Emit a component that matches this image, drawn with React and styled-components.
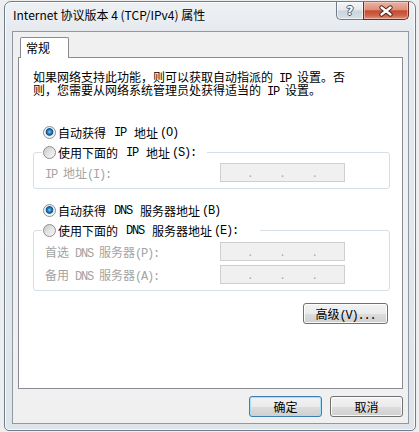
import React from "react"
import styled, { createGlobalStyle } from "styled-components"

const GlobalStyle = createGlobalStyle`
  html, body {
    margin: 0;
    padding: 0;
  }
  body {
    width: 419px;
    height: 432px;
    overflow: hidden;
    background: #eceef0;
    font-family: "Noto Sans CJK SC", "Noto Sans", sans-serif;
    font-size: 12px;
    color: #000;
  }
`

const Desktop = styled.div`
  width: 419px;
  height: 432px;
  box-sizing: border-box;
  padding: 1px 0 0 4px;
`

const Window = styled.div`
  width: 412px;
  height: 430px;
  box-sizing: border-box;
  border: 1px solid #6f7d8c;
  border-radius: 7px 7px 5px 5px;
  background: linear-gradient(180deg, #eef1f4 0%, #e6eaee 7%, #dfe4e9 100%);
  box-shadow: inset 0 0 0 1px rgba(255, 255, 255, 0.75);
  padding: 0 6px 6px 7px;
  display: flex;
  flex-direction: column;
`

const TitleBar = styled.div`
  height: 29px;
  display: flex;
  align-items: flex-start;
`

const Title = styled.div`
  padding: 5px 0 0 1px;
  line-height: 16px;
  font-size: 12px;
  white-space: nowrap;
`

const Caption = styled.div`
  margin-left: auto;
  display: flex;
`

const HelpButton = styled.div`
  width: 27px;
  height: 18px;
  box-sizing: border-box;
  border: 1px solid #6d7b8a;
  border-top: none;
  border-right: none;
  border-radius: 0 0 0 5px;
  background: linear-gradient(180deg, #f3f5f7 0%, #e3e8ec 48%, #cbd3db 52%, #d9dfe5 100%);
  box-shadow: inset 0 0 0 1px rgba(255, 255, 255, 0.6);
  display: flex;
  align-items: center;
  justify-content: center;
  font-family: "DejaVu Sans", sans-serif;
  font-weight: bold;
  font-size: 12px;
  color: #fff;
  text-shadow: 1px 0 #4d5b69, -1px 0 #4d5b69, 0 1px #4d5b69, 0 -1px #4d5b69;
`

const CloseButton = styled.div`
  width: 46px;
  height: 18px;
  box-sizing: border-box;
  border: 1px solid #6b2b22;
  border-top: none;
  border-radius: 0 0 5px 0;
  background: linear-gradient(180deg, #eab3a4 0%, #dc8f7a 46%, #c44a30 52%, #cf6447 80%, #e0977f 100%);
  box-shadow: inset 0 0 0 1px rgba(255, 220, 210, 0.5);
  display: flex;
  align-items: center;
  justify-content: center;
`

const Client = styled.div`
  height: 393px;
  box-sizing: border-box;
  border: 1px solid #8d99a6;
  background: #f0f0f0;
  padding: 5px 5px 0 5px;
  display: flex;
  flex-direction: column;
`

const TabStrip = styled.div`
  display: flex;
  padding-left: 2px;
`

const Tab = styled.div`
  position: relative;
  z-index: 1;
  width: 49px;
  height: 21px;
  box-sizing: border-box;
  margin-bottom: -1px;
  padding-left: 5px;
  border: 1px solid #898c95;
  border-bottom: none;
  border-radius: 2px 2px 0 0;
  background: #fff;
  line-height: 20px;
`

const Panel = styled.div`
  height: 332px;
  box-sizing: border-box;
  border: 1px solid #898c95;
  background: #fff;
  padding: 12px 12px 0 14px;
  display: flex;
  flex-direction: column;
`

const Description = styled.p`
  margin: 0;
  line-height: 13px;
  white-space: nowrap;
`

const Latin = styled.span`
  font-family: "Liberation Mono", monospace;
  font-size: 12px;
  letter-spacing: -1.2px;
  line-height: 0;
  white-space: pre;
`

const RadioRow = styled.label`
  display: flex;
  align-items: center;
  gap: 2px;
  height: 17px;
  margin-top: ${p => p.$top || 0}px;
  padding-left: ${p => (p.$inset ? 10 : 0)}px;
  line-height: 17px;
  white-space: nowrap;
`

const Radio = styled.span`
  flex: none;
  width: 13px;
  height: 13px;
  box-sizing: border-box;
  border-radius: 50%;
  border: 1px solid #8e8f8f;
  background: ${p =>
    p.$checked
      ? "radial-gradient(circle at 50% 45%, #8fdcf8 0, #2f8fcb 1.5px, #134f86 3.4px, #e9eef2 4.2px, #fbfbfb 6px)"
      : "linear-gradient(135deg, #c9c9c9 0%, #e6e6e6 55%, #f7f7f7 100%)"};
`

const Group = styled.fieldset`
  margin: ${p => p.$top || 0}px 0 0 0;
  padding: 0 0 6px 0;
  min-width: 0;
  border: 1px solid #d5dfe5;
  border-radius: 3px;
`

const Legend = styled.legend`
  margin-left: 8px;
  padding: 0 ${p => p.$gap}px 0 1px;
`

const FieldRow = styled.div`
  display: grid;
  grid-template-columns: 175px 125px;
  align-items: center;
  height: 19px;
  margin-top: ${p => p.$top}px;
  padding-left: 11px;
  color: #a3a3a3;
  line-height: 19px;
  white-space: nowrap;
`

const IpBox = styled.div`
  height: 19px;
  box-sizing: border-box;
  border: 1px solid #cfcfcf;
  background: #f0f0f0;
  display: grid;
  grid-template-columns: 1fr auto 1fr auto 1fr auto 1fr;
  align-items: end;
  padding-bottom: 1px;
`

const Dot = styled.span`
  font-family: "Liberation Mono", monospace;
  font-size: 10px;
  line-height: 10px;
  color: #a0a0a0;
`

const Button = styled.button`
  width: ${p => p.$w}px;
  height: 21px;
  box-sizing: border-box;
  padding: 0;
  font: inherit;
  line-height: 19px;
  color: #000;
  border: 1px solid ${p => (p.$primary ? "#3c7fb1" : "#707070")};
  border-radius: 3px;
  background: linear-gradient(180deg, #f2f2f2 0%, #ebebeb 50%, #dddddd 51%, #cfcfcf 100%);
  box-shadow: inset 0 0 0 1px ${p => (p.$primary ? "#a9def6" : "rgba(255, 255, 255, 0.85)")};
  white-space: nowrap;
`

const AdvancedButton = styled(Button)`
  align-self: flex-end;
  margin: 12px 2px 0 0;
`

const ButtonBar = styled.div`
  display: flex;
  justify-content: flex-end;
  gap: 8px;
  margin-top: 7px;
`

const ASCII = /^[\x20-\x7e]+$/

const Mixed = ({ children }) =>
  String(children)
    .split(/([\x20-\x7e]+)/)
    .filter(Boolean)
    .map((part, i) => (ASCII.test(part) ? <Latin key={i}>{part}</Latin> : part))

const CloseIcon = () => (
  <svg width="16" height="12" viewBox="0 0 16 12">
    <path d="M3.5 2.5 L12.5 9.5 M12.5 2.5 L3.5 9.5" stroke="#4a2019" strokeWidth="4.2" strokeLinecap="round" />
    <path d="M3.5 2.5 L12.5 9.5 M12.5 2.5 L3.5 9.5" stroke="#fff" strokeWidth="2.4" strokeLinecap="round" />
  </svg>
)

const IpField = () => (
  <IpBox>
    <span />
    <Dot>.</Dot>
    <span />
    <Dot>.</Dot>
    <span />
    <Dot>.</Dot>
    <span />
  </IpBox>
)

const App = () => (
  <>
    <GlobalStyle />
    <Desktop>
      <Window>
        <TitleBar>
          <Title>Internet 协议版本 4 (TCP/IPv4) 属性</Title>
          <Caption>
            <HelpButton>?</HelpButton>
            <CloseButton>
              <CloseIcon />
            </CloseButton>
          </Caption>
        </TitleBar>
        <Client>
          <TabStrip>
            <Tab>常规</Tab>
          </TabStrip>
          <Panel>
            <Description>
              <Mixed>如果网络支持此功能，则可以获取自动指派的 IP 设置。否</Mixed>
              <br />
              <Mixed>则，您需要从网络系统管理员处获得适当的 IP 设置。</Mixed>
            </Description>

            <RadioRow $top={28} $inset>
              <Radio $checked />
              <Mixed>自动获得 IP 地址(O)</Mixed>
            </RadioRow>
            <Group $top={3}>
              <Legend $gap={11}>
                <RadioRow>
                  <Radio />
                  <Mixed>使用下面的 IP 地址(S):</Mixed>
                </RadioRow>
              </Legend>
              <FieldRow $top={2}>
                <span><Mixed>IP 地址(I):</Mixed></span>
                <IpField />
              </FieldRow>
            </Group>

            <RadioRow $top={13} $inset>
              <Radio $checked />
              <Mixed>自动获得 DNS 服务器地址(B)</Mixed>
            </RadioRow>
            <Group $top={3}>
              <Legend $gap={22}>
                <RadioRow>
                  <Radio />
                  <Mixed>使用下面的 DNS 服务器地址(E):</Mixed>
                </RadioRow>
              </Legend>
              <FieldRow $top={3}>
                <span><Mixed>首选 DNS 服务器(P):</Mixed></span>
                <IpField />
              </FieldRow>
              <FieldRow $top={4}>
                <span><Mixed>备用 DNS 服务器(A):</Mixed></span>
                <IpField />
              </FieldRow>
            </Group>

            <AdvancedButton $w={85}>
              <Mixed>高级(V)...</Mixed>
            </AdvancedButton>
          </Panel>
          <ButtonBar>
            <Button $w={73} $primary>确定</Button>
            <Button $w={73}>取消</Button>
          </ButtonBar>
        </Client>
      </Window>
    </Desktop>
  </>
)

export default App
